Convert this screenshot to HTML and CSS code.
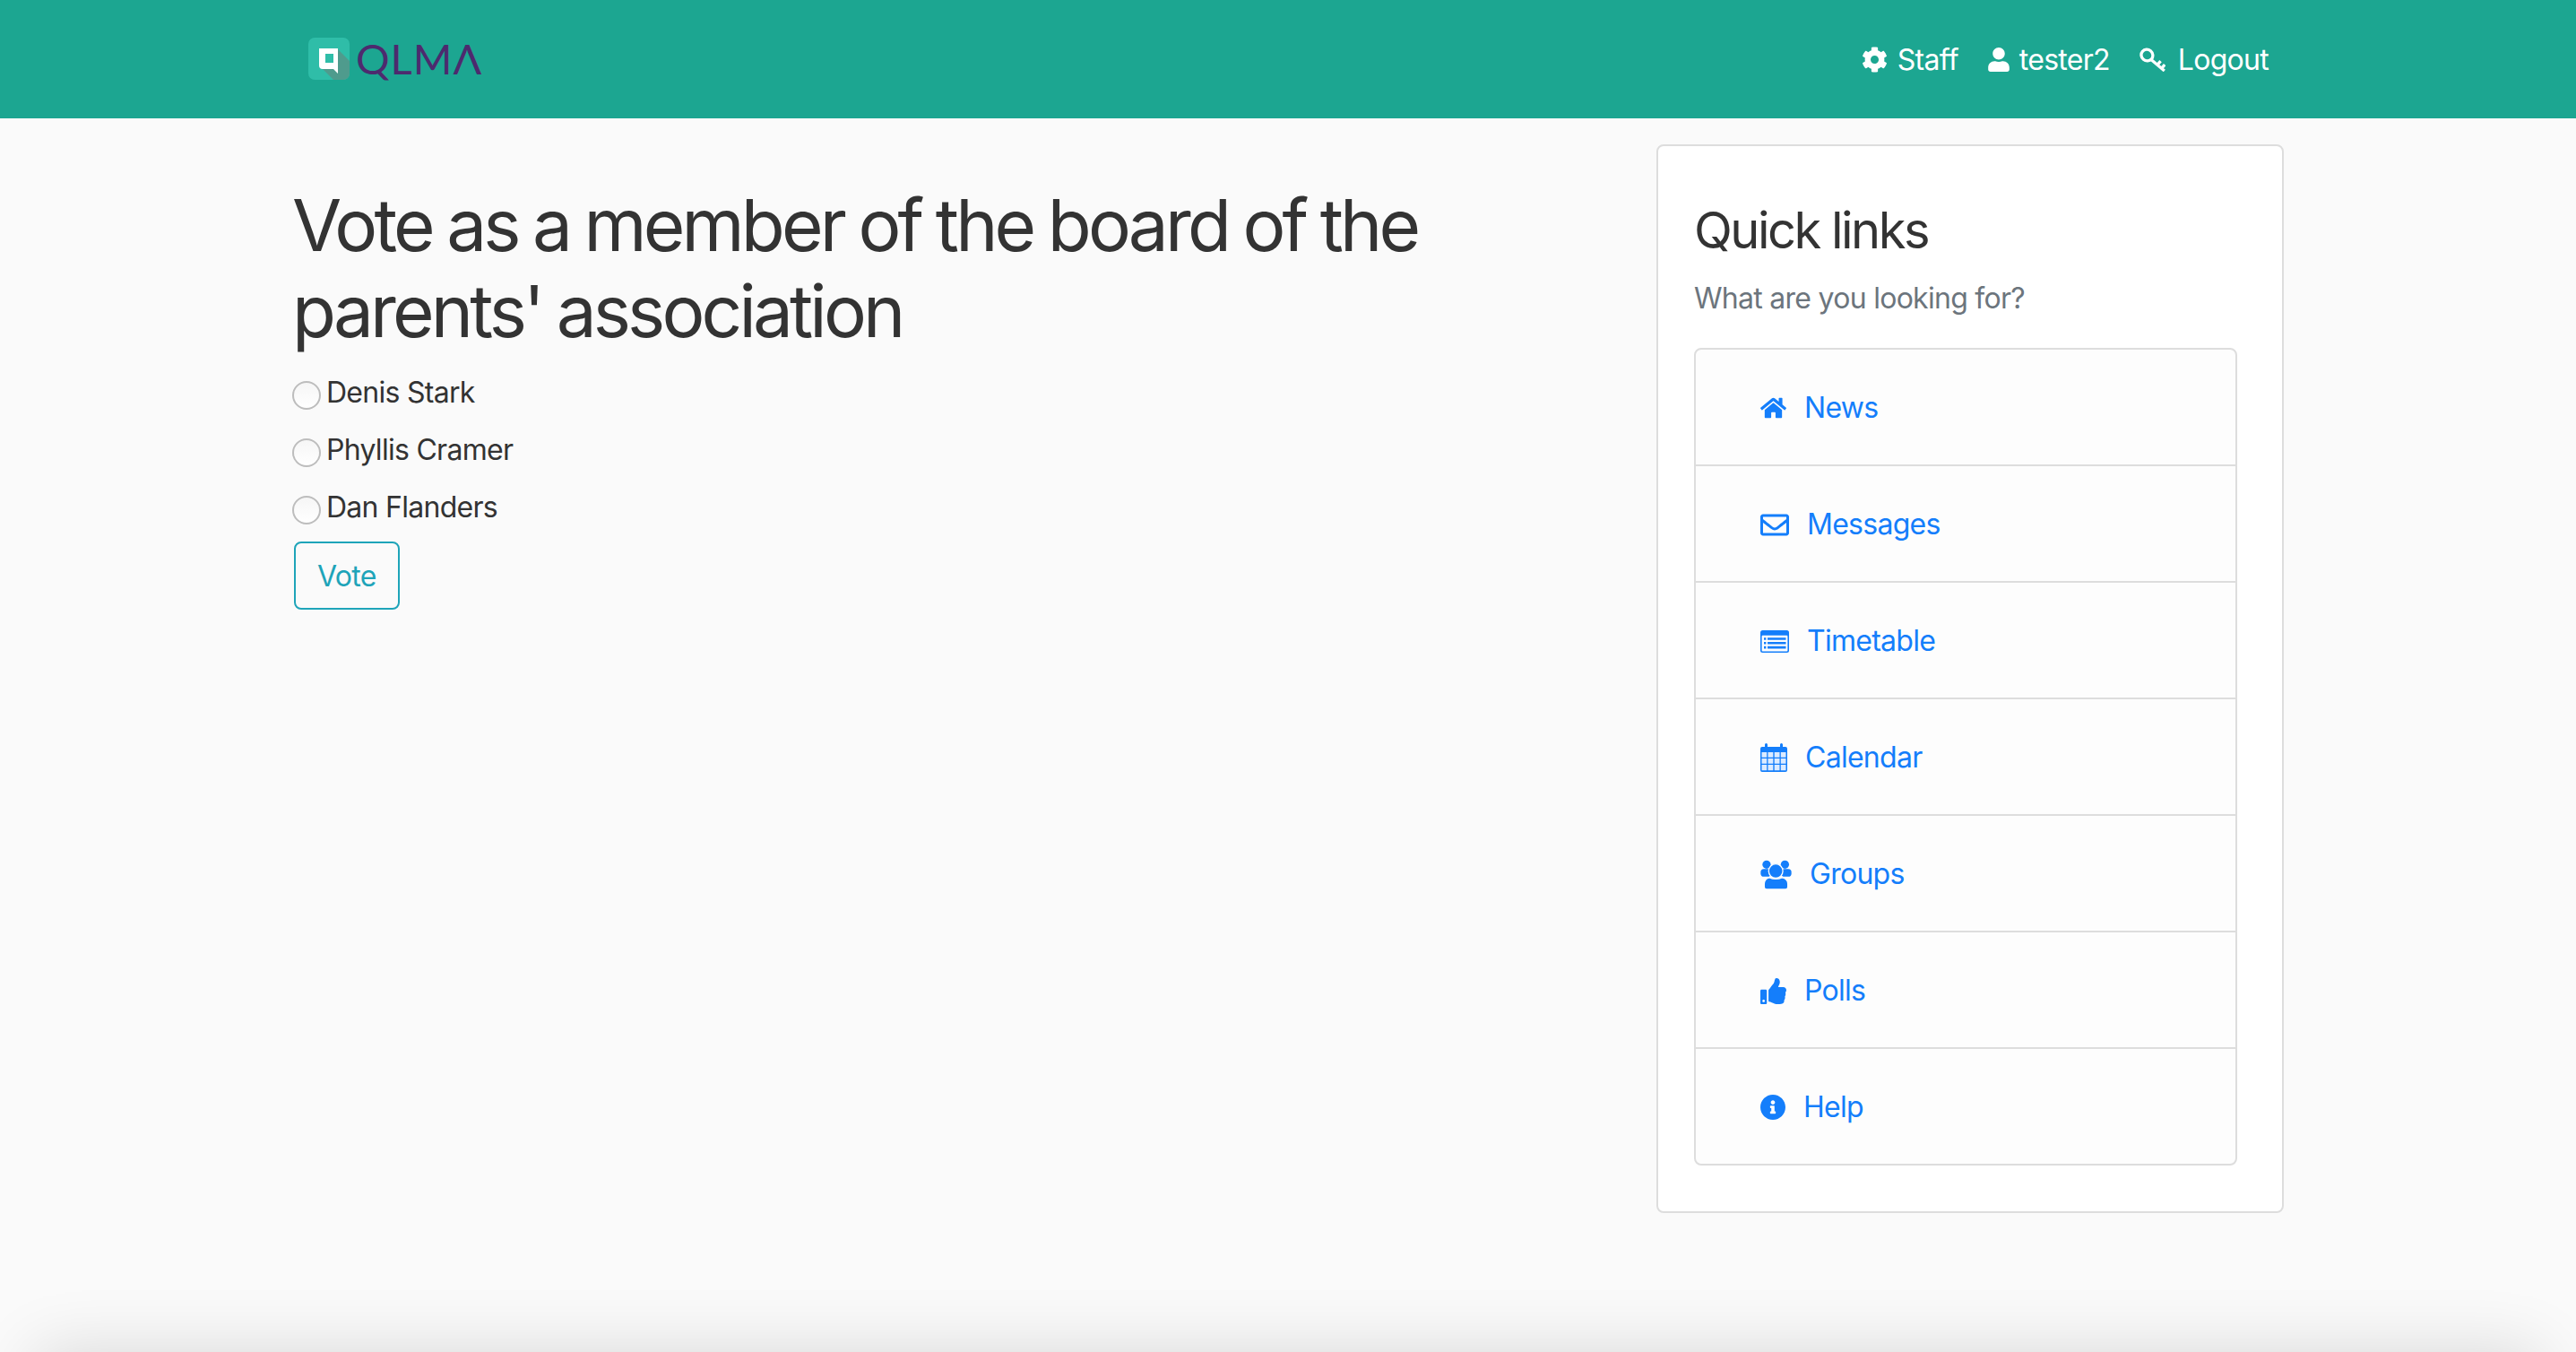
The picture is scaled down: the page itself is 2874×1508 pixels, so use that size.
FILE: index.html
```html
<!DOCTYPE html>
<html lang="en">
<head>
    <meta charset="UTF-8">
    <meta name="viewport" content="width=device-width, initial-scale=1.0">
    <title>QLMA</title>
    <link rel="stylesheet" href="styles.css">
</head>
<body>
    <header class="navbar">
        <div class="navbar-inner">
            <a class="brand" href="#" aria-label="QLMA">
                <svg class="brand-mark" viewBox="0 0 46 47">
                    <rect width="46" height="47" rx="7" fill="#2fbda8"/>
                    <path d="M33 13 L46 26 V40 a7 7 0 0 1 -7 7 H28 L16 35 Z" fill="#4f9b8d"/>
                    <path d="M12 12 H33 V40 L28 35 H16 a4 4 0 0 1 -4 -4 Z" fill="#fff"/>
                    <rect x="19" y="18" width="9" height="10" fill="#2fbda8"/>
                </svg>
                <span class="brand-name">QLMΛ</span>
            </a>
            <nav class="nav-links">
                <a class="nav-link" href="#">
                    <svg class="nav-icon" viewBox="0 0 512 512"><path fill="currentColor" d="M487.4 315.7l-42.6-24.6c4.3-23.2 4.3-47 0-70.2l42.6-24.6c4.9-2.8 7.1-8.6 5.5-14-11.1-35.6-30-67.8-54.7-94.6-3.8-4.1-10-5.1-14.8-2.3L380.8 110c-17.9-15.4-38.5-27.3-60.8-35.1V25.8c0-5.6-3.9-10.5-9.4-11.7-36.7-8.2-74.3-7.8-109.2 0-5.5 1.2-9.4 6.1-9.4 11.7V75c-22.2 7.9-42.8 19.8-60.8 35.1L88.7 85.5c-4.9-2.8-11-1.9-14.8 2.3-24.7 26.7-43.6 58.9-54.7 94.6-1.7 5.4.6 11.2 5.5 14L67.3 221c-4.3 23.2-4.3 47 0 70.2l-42.6 24.6c-4.9 2.8-7.1 8.6-5.5 14 11.1 35.6 30 67.8 54.7 94.6 3.8 4.1 10 5.1 14.8 2.3l42.6-24.6c17.9 15.4 38.5 27.3 60.8 35.1v49.2c0 5.6 3.9 10.5 9.4 11.7 36.7 8.2 74.3 7.8 109.2 0 5.5-1.2 9.4-6.1 9.4-11.7v-49.2c22.2-7.9 42.8-19.8 60.8-35.1l42.6 24.6c4.9 2.8 11 1.9 14.8-2.3 24.7-26.7 43.6-58.9 54.7-94.6 1.5-5.5-.7-11.3-5.6-14.1zM256 336c-44.1 0-80-35.9-80-80s35.9-80 80-80 80 35.9 80 80-35.9 80-80 80z"/></svg>
                    Staff
                </a>
                <a class="nav-link" href="#">
                    <svg class="nav-icon icon-user" viewBox="0 0 448 512"><path fill="currentColor" d="M224 256c70.7 0 128-57.3 128-128S294.7 0 224 0 96 57.3 96 128s57.3 128 128 128zm89.6 32h-16.7c-22.2 10.2-46.9 16-72.9 16s-50.6-5.800-72.900-16h-16.700C60.200 288 0 348.200 0 422.400V464c0 26.500 21.500 48 48 48h352c26.500 0 48-21.500 48-48v-41.600c0-74.200-60.200-134.400-134.400-134.400z"/></svg>
                    tester2
                </a>
                <a class="nav-link link-logout" href="#">
                    <svg class="nav-icon icon-key" viewBox="0 0 87 82"><g fill="none" stroke="currentColor" stroke-width="10"><ellipse cx="25" cy="26" rx="20" ry="19" transform="rotate(40 25 26)"/><path d="M39 41 L84 79 M60 59 L71 46 M74 71 L85 58"/></g></svg>
                    Logout
                </a>
            </nav>
        </div>
    </header>

    <main class="container">
        <section class="poll">
            <h1 class="poll-title">Vote as a member of the board of the parents' association</h1>
            <form class="poll-form">
                <label class="poll-option"><input type="radio" name="vote"> Denis Stark</label>
                <label class="poll-option"><input type="radio" name="vote"> Phyllis Cramer</label>
                <label class="poll-option"><input type="radio" name="vote"> Dan Flanders</label>
                <button class="vote-button" type="button">Vote</button>
            </form>
        </section>

        <aside class="quick-links">
            <h3 class="quick-title">Quick links</h3>
            <p class="quick-sub">What are you looking for?</p>
            <div class="link-list">
                <a class="link-item" href="#">
                    <svg class="link-icon icon-home" viewBox="0 0 576 512"><path fill="currentColor" d="M280.37 148.26L96 300.11V464a16 16 0 0 0 16 16l112.06-.29a16 16 0 0 0 15.92-16V368a16 16 0 0 1 16-16h64a16 16 0 0 1 16 16v95.64a16 16 0 0 0 16 16.05L464 480a16 16 0 0 0 16-16V300L295.67 148.26a12.19 12.19 0 0 0-15.3 0zM571.6 251.47L488 182.56V44.05a12 12 0 0 0-12-12h-56a12 12 0 0 0-12 12v72.61L318.47 43a48 48 0 0 0-61 0L4.34 251.47a12 12 0 0 0-1.6 16.9l25.5 31A12 12 0 0 0 45.15 301l235.22-193.74a12.19 12.19 0 0 1 15.3 0L530.9 301a12 12 0 0 0 16.9-1.6l25.5-31a12 12 0 0 0-1.7-16.93z"/></svg>
                    News
                </a>
                <a class="link-item" href="#">
                    <svg class="link-icon icon-envelope" viewBox="0 64 512 384"><path fill="currentColor" d="M464 64H48C21.49 64 0 85.49 0 112v288c0 26.51 21.49 48 48 48h416c26.51 0 48-21.49 48-48V112c0-26.51-21.49-48-48-48zm0 48v40.805c-22.422 18.259-58.168 46.651-134.587 106.49-16.841 13.247-50.201 45.072-73.413 44.701-23.208.375-56.579-31.459-73.413-44.701C106.18 199.465 70.425 171.067 48 152.805V112h416zM48 400V214.398c22.914 18.251 55.409 43.862 104.938 82.646 21.857 17.205 60.134 55.186 103.062 54.955 42.717.231 80.509-37.199 103.053-54.947 49.528-38.783 82.032-64.401 104.947-82.653V400H48z"/></svg>
                    Messages
                </a>
                <a class="link-item" href="#">
                    <svg class="link-icon icon-timetable" viewBox="0 0 32 25">
                        <rect width="32" height="25" rx="2.500" fill="currentColor"/>
                        <rect x="1.600" y="5.800" width="28.800" height="17.600" rx="1" fill="#fdfdfd"/>
                        <path fill="currentColor" d="M4 8.200h2.400v2.600H4zM4 13h2.400v2.600H4zM4 17.800h2.400v2.600H4zM8 8.200h20.500v2.600H8zM8 13h20.500v2.600H8zM8 17.800h20.500v2.600H8z"/>
                    </svg>
                    Timetable
                </a>
                <a class="link-item" href="#">
                    <svg class="link-icon icon-calendar" viewBox="0 0 30 32">
                        <path fill="currentColor" d="M2 4h3V1.500a1.500 1.500 0 0 1 3 0V4h14V1.500a1.500 1.500 0 0 1 3 0V4h3a2 2 0 0 1 2 2v24a2 2 0 0 1-2 2H2a2 2 0 0 1-2-2V6a2 2 0 0 1 2-2z"/>
                        <path fill="#dcebff" d="M1.500 10h5.700v5.700H1.500zM8.500 10h5.800v5.700H8.500zM15.700 10h5.800v5.700h-5.800zM22.800 10h5.700v5.700h-5.700zM1.500 17h5.700v5.700H1.500zM8.500 17h5.800v5.700H8.500zM15.700 17h5.800v5.700h-5.800zM22.800 17h5.700v5.700h-5.700zM1.500 24h5.700v6.300H1.500zM8.500 24h5.800v6.300H8.500zM15.700 24h5.800v6.300h-5.800zM22.800 24h5.700v6.300h-5.700z"/>
                    </svg>
                    Calendar
                </a>
                <a class="link-item" href="#">
                    <svg class="link-icon icon-users" viewBox="0 0 104 100">
                        <circle cx="20" cy="16" r="14" fill="currentColor"/>
                        <circle cx="82" cy="16" r="14" fill="currentColor"/>
                        <rect x="0" y="31" width="34" height="26" rx="11" fill="currentColor"/>
                        <rect x="70" y="31" width="34" height="26" rx="11" fill="currentColor"/>
                        <circle cx="51" cy="38" r="24" fill="currentColor" stroke="#fdfdfd" stroke-width="4"/>
                        <path fill="currentColor" stroke="#fdfdfd" stroke-width="4" d="M30 60c12 6 30 6 42 0 12 2 20 10 20 22v10a8 8 0 0 1-8 8H20a8 8 0 0 1-8-8V82c0-12 8-20 18-22z"/>
                    </svg>
                    Groups
                </a>
                <a class="link-item" href="#">
                    <svg class="link-icon icon-thumb" viewBox="0 0 512 512"><path fill="currentColor" d="M104 224H24c-13.255 0-24 10.745-24 24v240c0 13.255 10.745 24 24 24h80c13.255 0 24-10.745 24-24V248c0-13.255-10.745-24-24-24zM64 472c-13.255 0-24-10.745-24-24s10.745-24 24-24 24 10.745 24 24-10.745 24-24 24zM384 81.452c0 42.416-25.97 66.208-33.277 94.548h101.723c33.397 0 59.397 27.746 59.553 58.098.084 17.938-7.546 37.249-19.439 49.197l-.11.11c9.836 23.337 8.237 56.037-9.308 79.469 8.681 25.895-.069 57.704-16.382 74.757 4.298 17.598 2.244 32.575-6.148 44.632C440.202 511.587 389.616 512 346.839 512l-2.845-.001c-48.287-.017-87.806-17.598-119.56-31.725-15.957-7.099-36.821-15.887-52.651-16.178-6.54-.12-11.783-5.457-11.783-11.998v-213.77c0-3.2 1.282-6.271 3.558-8.521 39.614-39.144 56.648-80.587 89.117-113.111 14.804-14.832 20.188-37.236 25.393-58.902C282.515 39.293 291.817 0 312 0c24 0 72 8 72 81.452z"/></svg>
                    Polls
                </a>
                <a class="link-item" href="#">
                    <svg class="link-icon icon-info" viewBox="8 8 496 496"><path fill="currentColor" d="M256 8C119.043 8 8 119.083 8 256c0 136.997 111.043 248 248 248s248-111.003 248-248C504 119.083 392.957 8 256 8zm0 110c23.196 0 42 18.804 42 42s-18.804 42-42 42-42-18.804-42-42 18.804-42 42-42zm56 254c0 6.627-5.373 12-12 12h-88c-6.627 0-12-5.373-12-12v-24c0-6.627 5.373-12 12-12h12v-64h-12c-6.627 0-12-5.373-12-12v-24c0-6.627 5.373-12 12-12h64c6.627 0 12 5.373 12 12v100h12c6.627 0 12 5.373 12 12v24z"/></svg>
                    Help
                </a>
            </div>
        </aside>
    </main>

    <div class="page-shadow"></div>
</body>
</html>
```

FILE: styles.css
```css
:root {
    --teal: #1ca691;
    --link-blue: #147efb;
    --text-color: #333333;
    --muted: #6c757d;
    --line: #dddddd;
    --info: #1ea4b9;
}

html, body {
    height: 100%;
}

body {
    margin: 0;
    background-color: #fafafa;
    color: var(--text-color);
    font-family: 'Inter', 'Liberation Sans', sans-serif;
    font-size: 32px;
    line-height: 48px;
    letter-spacing: -0.72px;
    overflow: hidden;
}

a {
    text-decoration: none;
}

.navbar {
    height: 132px;
    background-color: var(--teal);
}

.navbar-inner {
    width: 2220px;
    height: 100%;
    margin: 0 auto;
    display: flex;
    align-items: center;
    justify-content: space-between;
}

.brand {
    display: flex;
    align-items: center;
    gap: 7px;
    margin-left: 17px;
    margin-bottom: 2px;
}

.brand-mark {
    width: 46px;
    height: 47px;
}

.brand-name {
    font-family: 'Lato', 'Liberation Sans', sans-serif;
    font-size: 47px;
    line-height: 47px;
    letter-spacing: 1px;
    color: #4d2a6e;
}

.nav-links {
    display: flex;
    align-items: center;
    gap: 33px;
    margin-right: 16px;
    padding-top: 2px;
}

.nav-link {
    display: flex;
    align-items: center;
    gap: 11px;
    color: #ffffff;
}

.link-logout {
    gap: 14px;
}

.nav-icon {
    width: 29px;
    height: 29px;
    margin-top: -2px;
}

.icon-user {
    width: 24px;
    height: 27px;
}

.icon-key {
    width: 29px;
    height: 27px;
}

.container {
    width: 2220px;
    margin: 0 auto;
    padding-left: 2px;
    display: grid;
    grid-template-columns: 1fr 700px;
    gap: 60px;
    align-items: start;
}

.poll {
    padding-top: 71px;
}

.poll-title {
    margin: 0 0 19px -2px;
    font-size: 80px;
    line-height: 96px;
    font-weight: 400;
    letter-spacing: -3.85px;
    word-spacing: -2.2px;
}

.poll-option {
    display: flex;
    align-items: center;
    gap: 6px;
    height: 48px;
    margin-bottom: 16px;
}

.poll-option:nth-of-type(3) {
    margin-bottom: 14px;
}

.poll-option input {
    appearance: none;
    width: 32px;
    height: 32px;
    margin: 6px 0 0 -2px;
    border: 2px solid #bdbdbd;
    border-radius: 50%;
    background: linear-gradient(#f6f6f6, #ffffff);
}

.vote-button {
    display: block;
    padding: 13px 24px 11px;
    border: 2px solid var(--info);
    border-radius: 8px;
    background: transparent;
    color: var(--info);
    font: inherit;
    letter-spacing: inherit;
}

.quick-links {
    margin-top: 29px;
    padding: 61px 50px 51px 40px;
    background-color: #ffffff;
    border: 2px solid var(--line);
    border-radius: 8px;
}

.quick-title {
    margin: 0 0 18px;
    font-size: 56px;
    line-height: 67px;
    font-weight: 400;
    letter-spacing: -2.5px;
}

.quick-sub {
    margin: 0 0 31px;
    color: var(--muted);
}

.link-list {
    background-color: #fdfdfd;
    border: 2px solid var(--line);
    border-radius: 8px;
}

.link-item {
    display: flex;
    align-items: center;
    gap: 20px;
    height: 126px;
    padding: 2px 0 0 72px;
    color: var(--link-blue);
    border-bottom: 2px solid var(--line);
}

.link-item:last-child {
    border-bottom: none;
}

.link-icon {
    flex: none;
}

.icon-home {
    width: 29px;
    height: 26px;
}

.icon-envelope {
    width: 32px;
    height: 25px;
}

.icon-timetable {
    width: 32px;
    height: 25px;
}

.icon-calendar {
    width: 30px;
    height: 32px;
}

.icon-users {
    width: 35px;
    height: 33px;
}

.icon-thumb {
    width: 29px;
    height: 29px;
}

.icon-info {
    width: 28px;
    height: 28px;
}

/* shadow of a sheet sitting just under the fold */
.page-shadow {
    position: fixed;
    left: 40px;
    right: 40px;
    top: 100%;
    height: 300px;
    box-shadow: 0 0 70px rgba(0, 0, 0, 0.14);
}
```
